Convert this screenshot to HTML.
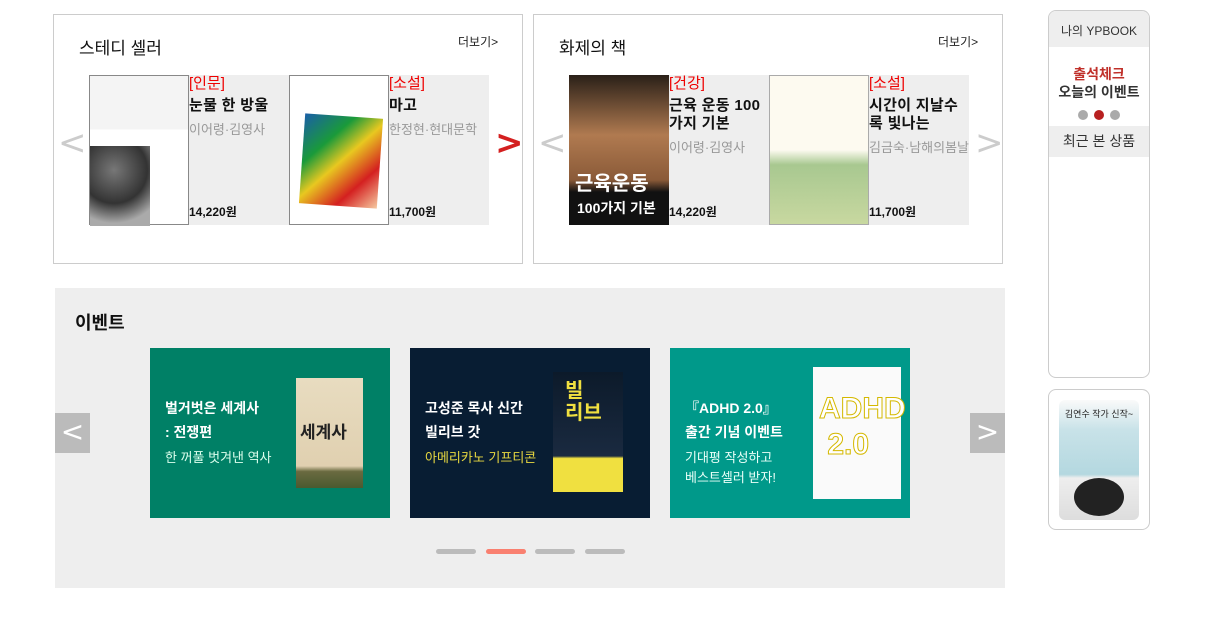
<!DOCTYPE html>
<html><head><meta charset="utf-8"><style>
*{margin:0;padding:0;box-sizing:border-box}
body{width:1214px;height:626px;background:#fff;font-family:"Liberation Sans","Noto Sans CJK KR",sans-serif;position:relative;overflow:hidden;color:#111}
.a{position:absolute}
.box{border:1px solid #ccc;background:#fff}
.t{font-size:17px;color:#111}
.more{font-size:12px;color:#222}
.info{background:#eee;width:100px;height:150px}
.cat{color:#e00;font-size:15px;line-height:18px}
.nm{font-size:15px;font-weight:bold;line-height:18px;margin-top:4px;letter-spacing:0.3px}
.au{color:#999;font-size:13px;margin-top:4px;white-space:nowrap;overflow:hidden}
.pr{position:absolute;left:0;top:128px;font-size:12px;font-weight:bold}
.arr{font-size:34px;color:#ccc;line-height:1;font-family:"DejaVu Sans",sans-serif}
.card{width:240px;height:170px;color:#fff}
.card .h{position:absolute;left:15px;top:48px;font-size:14px;font-weight:bold;line-height:24px}
.card .s{position:absolute;left:15px;font-size:13px;line-height:20px}
.dot{height:5px;width:40px;border-radius:3px;background:#bbb;top:549px}
</style></head><body>
<div class="a box" style="left:53px;top:14px;width:470px;height:250px"></div>
<div class="a t" style="left:79px;top:34px">스테디 셀러</div>
<div class="a more" style="left:458px;top:33px">더보기&gt;</div>
<div class="a arr" style="left:58px;top:126px">&lt;</div>
<div class="a arr" style="left:495px;top:126px;color:#d42020;font-weight:bold">&gt;</div>
<div class="a" style="left:89px;top:75px;width:100px;height:150px;border:1px solid #888;background:linear-gradient(#f4f4f4 0,#f4f4f4 36%,#fff 36%)"><div class="a" style="left:0;top:70px;width:60px;height:80px;background:radial-gradient(circle at 40% 30%,#777,#333 50%,#aaa 80%)"></div></div>
<div class="a info" style="left:189px;top:75px"><div class="cat">[인문]</div><div class="nm">눈물 한 방울</div><div class="au">이어령·김영사</div><div class="pr">14,220원</div></div>
<div class="a" style="left:289px;top:75px;width:100px;height:150px;border:1px solid #888;background:#fff"><div class="a" style="left:12px;top:40px;width:78px;height:90px;background:linear-gradient(135deg,#1a5fa8 0,#1a9a3a 30%,#e8c820 50%,#d42020 75%,#f5c9a0 100%);transform:rotate(4deg)"></div></div>
<div class="a info" style="left:389px;top:75px"><div class="cat">[소설]</div><div class="nm">마고</div><div class="au">한정현·현대문학</div><div class="pr">11,700원</div></div>

<div class="a box" style="left:533px;top:14px;width:470px;height:250px"></div>
<div class="a t" style="left:559px;top:34px">화제의 책</div>
<div class="a more" style="left:938px;top:33px">더보기&gt;</div>
<div class="a arr" style="left:538px;top:126px">&lt;</div>
<div class="a arr" style="left:975px;top:126px">&gt;</div>
<div class="a" style="left:569px;top:75px;width:100px;height:150px;background:linear-gradient(#2a2018,#b07a50 40%,#8a5a38 70%,#111 78%)"><div class="a" style="left:6px;top:92px;font-size:20px;font-weight:bold;color:#fff">근육운동</div><div class="a" style="left:8px;top:123px;font-size:14px;font-weight:bold;color:#fff">100가지 기본</div></div>
<div class="a info" style="left:669px;top:75px"><div class="cat">[건강]</div><div class="nm">근육 운동 100 가지 기본</div><div class="au">이어령·김영사</div><div class="pr">14,220원</div></div>
<div class="a" style="left:769px;top:75px;width:100px;height:150px;border:1px solid #aaa;background:linear-gradient(#fdfaf0 0,#fdfaf0 50%,#a8c890 60%,#c8d8a0 100%)"></div>
<div class="a info" style="left:869px;top:75px"><div class="cat">[소설]</div><div class="nm">시간이 지날수록 빛나는</div><div class="au">김금숙·남해의봄날</div><div class="pr">11,700원</div></div>

<div class="a" style="left:55px;top:288px;width:950px;height:300px;background:#eee"></div>
<div class="a" style="left:75px;top:309px;font-size:18px;font-weight:bold">이벤트</div>
<div class="a" style="left:55px;top:413px;width:35px;height:40px;background:#bbb;color:#fff;font-size:28px;text-align:center;line-height:38px;font-family:'DejaVu Sans',sans-serif">&lt;</div>
<div class="a" style="left:970px;top:413px;width:35px;height:40px;background:#bbb;color:#fff;font-size:28px;text-align:center;line-height:38px;font-family:'DejaVu Sans',sans-serif">&gt;</div>
<div class="a card" style="left:150px;top:348px;background:#008066"><div class="h">벌거벗은 세계사<br>: 전쟁편</div><div class="s" style="top:100px;color:#dfe">한 꺼풀 벗겨낸 역사</div><div class="a" style="left:146px;top:30px;width:67px;height:110px;background:linear-gradient(#e8dcc0 0,#e0d0b0 80%,#6a6a40 85%,#4a5a30 100%)"><div class="a" style="left:4px;top:40px;font-size:17px;font-weight:bold;color:#222">세계사</div></div></div>
<div class="a card" style="left:410px;top:348px;background:#081d33"><div class="h">고성준 목사 신간<br>빌리브 갓</div><div class="s" style="top:100px;color:#e8d840">아메리카노 기프티콘</div><div class="a" style="left:143px;top:24px;width:70px;height:120px;background:linear-gradient(#0c1a2a 0,#1a2a40 70%,#f0e040 72%,#f0e040 100%)"><div class="a" style="left:12px;top:8px;font-size:20px;font-weight:bold;color:#f0e040;line-height:22px">빌<br>리브</div></div></div>
<div class="a card" style="left:670px;top:348px;background:#00998a"><div class="h">『ADHD 2.0』<br>출간 기념 이벤트</div><div class="s" style="top:100px;color:#e8fff8">기대평 작성하고<br>베스트셀러 받자!</div><div class="a" style="left:143px;top:19px;width:88px;height:132px;background:#fafafa"><div class="a" style="left:6px;top:24px;font-size:30px;font-weight:bold;color:#fff;-webkit-text-stroke:1px #d4b800;line-height:36px">ADHD<br>&nbsp;2.0</div></div></div>
<div class="a dot" style="left:436px"></div>
<div class="a dot" style="left:486px;background:#f98070"></div>
<div class="a dot" style="left:535px"></div>
<div class="a dot" style="left:585px"></div>

<div class="a" style="left:1048px;top:10px;width:102px;height:368px;border:1px solid #ccc;border-radius:8px;overflow:hidden">
<div style="background:#eee;height:36px;text-align:center;font-size:12px;line-height:40px;color:#333">나의 YPBOOK</div>
<div style="text-align:center;margin-top:18px;font-size:14px;font-weight:bold;color:#c0302a;line-height:18px">출석체크</div>
<div style="text-align:center;font-size:14px;font-weight:bold;color:#333;line-height:18px">오늘의 이벤트</div>
<div style="text-align:center;margin-top:6px;height:12px"><span style="display:inline-block;width:10px;height:10px;border-radius:5px;background:#aaa;margin:0 3px"></span><span style="display:inline-block;width:10px;height:10px;border-radius:5px;background:#b82020;margin:0 3px"></span><span style="display:inline-block;width:10px;height:10px;border-radius:5px;background:#aaa;margin:0 3px"></span></div>
<div style="background:#eee;height:31px;margin-top:7px;text-align:center;font-size:14px;line-height:31px;color:#333">최근 본 상품</div>
</div>
<div class="a" style="left:1048px;top:389px;width:102px;height:141px;border:1px solid #ccc;border-radius:8px"></div>
<div class="a" style="left:1059px;top:400px;width:80px;height:120px;border-radius:6px;background:linear-gradient(#fafafa 0,#c8e2e8 25%,#b4d8e0 62%,#eee 65%,#ddd 100%);overflow:hidden"><div style="text-align:center;font-size:9px;margin-top:7px;color:#222">김연수 작가 신작~</div><div class="a" style="left:15px;top:78px;width:50px;height:38px;border-radius:50%;background:#222"></div></div>
</body></html>
